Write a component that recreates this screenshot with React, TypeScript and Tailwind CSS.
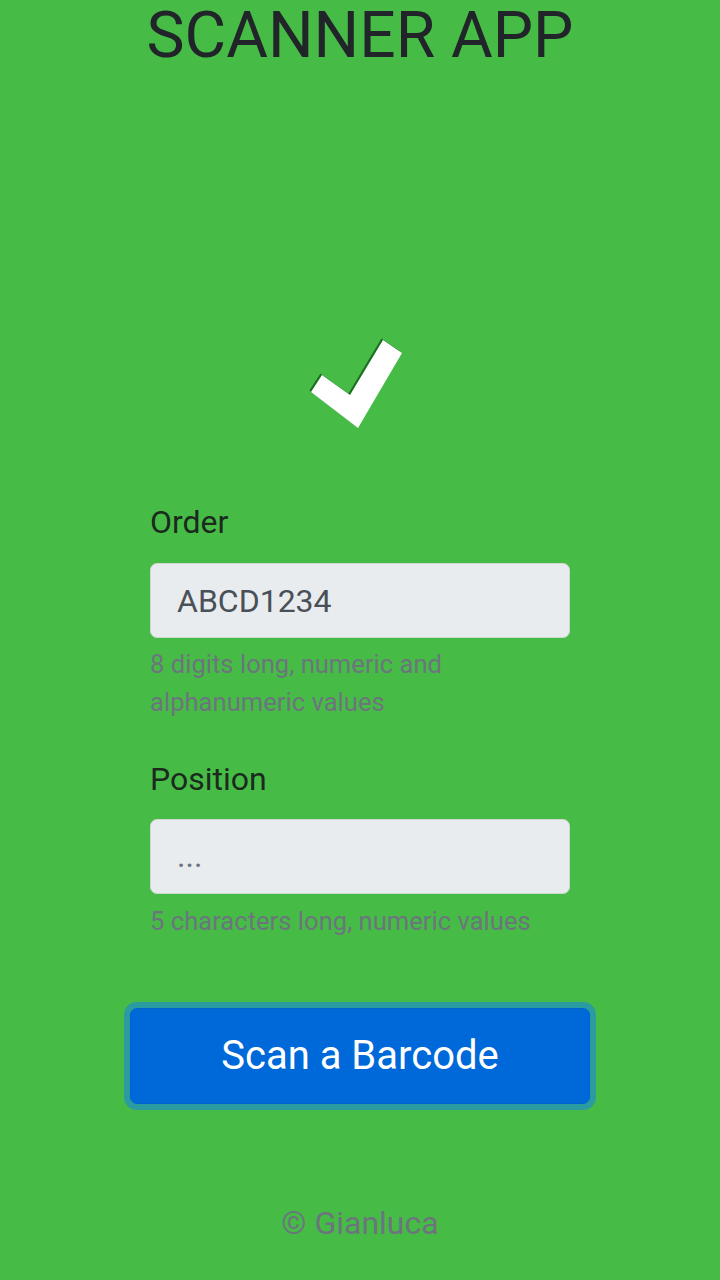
import React from "react";

export default function App() {
  return (
    <div
      className="min-h-[1280px] w-[720px] bg-[#46bc47] flex flex-col items-center"
      style={{ fontFamily: "Roboto, 'Liberation Sans', sans-serif" }}
    >
      <h1 className="text-[64px] leading-[72px] font-normal text-[#212529] m-0">SCANNER APP</h1>

      <div className="mt-[262px] w-[120px] h-[100px]">
        <svg width="120" height="100" viewBox="0 0 120 100">
          <polygon
            points="83,6 102,19 58,94 11,58 22,41 50,61"
            fill="#1d6f22"
            transform="translate(-1.6,-1.4)"
          />
          <polygon points="83,6 102,19 58,94 11,58 22,41 50,61" fill="#ffffff" />
        </svg>
      </div>

      <div className="mt-[64px] w-[420px] flex flex-col">
        <label className="text-[32px] leading-[48px] text-[#1b2a1d]">Order</label>
        <div className="mt-[17px] h-[75px] rounded-[7px] border border-[#cdd8cf] bg-[#e9ecef] flex items-center pl-[26px] text-[32px] text-[#495057]">
          ABCD1234
        </div>
        <p className="mt-[7px] text-[25.6px] leading-[38.4px] text-[#6c757d]">
          8 digits long, numeric and
          <br />
          alphanumeric values
        </p>

        <label className="mt-[33px] text-[32px] leading-[48px] text-[#1b2a1d]">Position</label>
        <div className="mt-[16px] h-[75px] rounded-[7px] border border-[#cdd8cf] bg-[#e9ecef] flex items-center pl-[26px] text-[32px] text-[#6c757d]">
          ...
        </div>
        <p className="mt-[8px] text-[25.6px] leading-[38.4px] text-[#6c757d]">
          5 characters long, numeric values
        </p>
      </div>

      <button className="mt-[68px] w-[460px] h-[96px] rounded-[7px] bg-[#0069d9] border border-[#0062cc] text-white text-[40px] ring-[6px] ring-[#2a9ca1]">
        Scan a Barcode
      </button>

      <div className="mt-[95px] text-[32px] leading-[48px] text-[#6c757d]">© Gianluca</div>
    </div>
  );
}
